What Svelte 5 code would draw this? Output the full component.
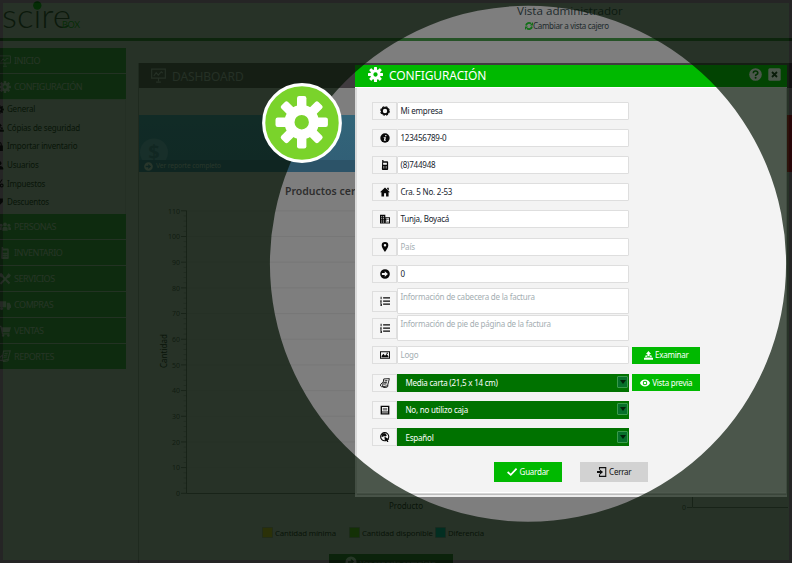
<script>
  const fields = [
    { icon: 'ring', text: 'Mi empresa' },
    { icon: 'info', text: '123456789-0' },
    { icon: 'phone', text: '(8)744948' },
    { icon: 'home', text: 'Cra. 5 No. 2-53' },
    { icon: 'building', text: 'Tunja, Boyacá' },
    { icon: 'pin', text: 'País', hint: true },
    { icon: 'arrow', text: '0' },
    { icon: 'list', text: 'Información de cabecera de la factura', hint: true, area: true },
    { icon: 'list', text: 'Información de pie de página de la factura', hint: true, area: true },
    { icon: 'image', text: 'Logo', hint: true, button: 'Examinar', buttonIcon: 'upload' },
    { icon: 'report', text: 'Media carta (21,5 x 14 cm)', select: true, button: 'Vista previa', buttonIcon: 'eye' },
    { icon: 'box', text: 'No, no utilizo caja', select: true },
    { icon: 'globe', text: 'Español', select: true }
  ];
  const topItems = [['board', 'INICIO'], ['gear', 'CONFIGURACIÓN']];
  const subItems = [
    ['gear', 'General'],
    ['upload', 'Cópias de seguridad'],
    ['lock', 'Importar inventario'],
    ['user', 'Usuarios'],
    ['percent', 'Impuestos'],
    ['tag', 'Descuentos']
  ];
  const lowItems = [
    ['people', 'PERSONAS'],
    ['phone', 'INVENTARIO'],
    ['tools', 'SERVICIOS'],
    ['truck', 'COMPRAS'],
    ['cart', 'VENTAS'],
    ['report', 'REPORTES']
  ];
  const legend = [
    ['#8a7a14', 'Cantidad mínima', 263, 61],
    ['#3c7a10', 'Cantidad disponible', 350, 71],
    ['#007068', 'Diferencia', 436, 36]
  ];
  const teeth = [0, 45, 90, 135, 180, 225, 270, 315];
  const majors = Array.from({ length: 12 }, (_, i) => i);
  const minors = Array.from({ length: 55 }, (_, i) => i).filter((i) => i % 5);
</script>

{#snippet icon(name, size)}
  <svg class="icon" width={size} height={size} viewBox="0 0 16 16" fill="currentColor" stroke="none">
    {#if name === 'gear'}
      {#each teeth as a}
        <rect x="6.4" y="0" width="3.2" height="5" rx=".6" transform="rotate({a} 8 8)" />
      {/each}
      <circle cx="8" cy="8" r="3.9" fill="none" stroke="currentColor" stroke-width="3.2" />
    {:else if name === 'ring'}
      <circle cx="8" cy="8" r="5" fill="none" stroke="currentColor" stroke-width="3" />
      <circle cx="8" cy="8" r="6.8" fill="none" stroke="currentColor" stroke-width="1.8" stroke-dasharray="3.4 1.94" />
    {:else if name === 'info'}
      <circle cx="8" cy="8" r="7.5" />
      <path d="M8.5 3.2h2l-.5 2H8zM6 6.7h3.6L8.5 11h1l-.3 1.4H6L7 8.1H5.7z" fill="#f5f5f5" />
    {:else if name === 'phone'}
      <path fill-rule="evenodd" d="M3.5 2.5V0h2v2h6q1.5 0 1.5 1.5v11q0 1.5-1.5 1.5h-7Q3 16 3 14.5zM5 4.5v3h6v-3zM5 9.5v1h1.4v-1zm2.3 0v1h1.4v-1zm2.3 0v1H11v-1zM5 12v1h1.4v-1zm2.3 0v1h1.4v-1zm2.3 0v1H11v-1z" />
    {:else if name === 'home'}
      <path fill-rule="evenodd" d="M8 .8 16 8.5h-2.3V15H9.7v-5H6.5v5H2.3V8.5H0zM11.5 1H14v4l-2.5-2z" />
    {:else if name === 'building'}
      <path fill-rule="evenodd" d="M0 1h8.5v4H16v10H0zM2 3v1.5h1.5V3zm3 0v1.5h1.5V3zM2 6v1.5h1.5V6zm3 0v1.5h1.5V6zM2 9v1.5h1.5V9zm3 0v1.5h1.5V9zM2 12v1.5h1.5V12zm3 0v1.5h1.5V12zm4-5.4v1h1.5v1.8H9v1h1.5v1.7H9v1.3h5.5V6.600zm3 1.400h1.400v1.400H12zm0 3h1.400v1.400H12z" />
    {:else if name === 'pin'}
      <path fill-rule="evenodd" d="M8 0a5.300 5.300 0 0 0-5.300 5.300C2.700 9.500 8 16 8 16s5.300-6.500 5.300-10.700A5.300 5.300 0 0 0 8 0zm0 3.300a2 2 0 1 1 0 4 2 2 0 0 1 0-4z" />
    {:else if name === 'arrow'}
      <path fill-rule="evenodd" d="M8 .3a7.700 7.700 0 1 1 0 15.400A7.700 7.700 0 0 1 8 .3zM7.600 3.500v3H3v3h4.600v3L12.700 8z" />
    {:else if name === 'list'}
      <path d="M5 2h11v2H5zm0 5h11v2H5zm0 5h11v2H5zM1 1h1.500v4H1zM0 7h3v1L1.700 9.200H3v1H0V9l1.500-1.200H0zm0 5h3v4H0v-1h1.800v-.5H1v-1h.8V13H0z" />
    {:else if name === 'image'}
      <path fill-rule="evenodd" d="M0 2h16v12H0zm1.500 1.500v9h13v-9z" />
      <path d="M2.500 11.500v-2L5.500 6 8 9l2.500-2.500 3 3.500v1.500z" /><circle cx="11.500" cy="5.300" r="1.200" />
    {:else if name === 'report'}
      <g fill="none" stroke="currentColor" stroke-width="1.400">
        <path d="M6 1.500 15 1 12 12.500 4 14zM4 14C1 14.500 0 12 1.500 9.500L4.500 7M5 15.500l6-.8q1.500-.5 2-2.500" />
        <path d="M7.300 4.600l4.500-.4M6.600 7.200l4.500-.4M5.900 9.800l4.500-.5" />
      </g>
    {:else if name === 'box'}
      <path fill-rule="evenodd" d="M1 1h14v14H1zm2.200 2v7.500h9.600V3zm0 9v1.200h9.600V12z" /><path d="M4.500 5h7v1h-7zm0 2.200h7v1h-7z" />
    {:else if name === 'globe'}
      <circle cx="7.500" cy="7.500" r="6.500" fill="none" stroke="currentColor" stroke-width="1.800" />
      <path d="M4 2.500 8 2l3 3-2 2-3-1-1 2-3-1zM7 7l8 5-3 .5 1.500 3-2 .8-1.500-3L8 15z" />
    {:else if name === 'upload'}
      <path d="M8 0l4.500 5.300H10V9H6V5.300H3.500zM3 7.500h2v2.700h6V7.500h2l1 3.500H2zM0 12h16v3.500H0z" />
    {:else if name === 'eye'}
      <path fill-rule="evenodd" d="M8 2.500c3.600 0 6.700 2.200 8 5.500-1.300 3.300-4.400 5.500-8 5.500S1.300 11.300 0 8c1.300-3.300 4.400-5.500 8-5.500zm0 1.900a3.600 3.600 0 1 0 0 7.200 3.600 3.600 0 0 0 0-7.200zm0 1.500a2.100 2.100 0 1 1 0 4.200 2.100 2.100 0 0 1 0-4.200z" />
    {:else if name === 'check'}
      <path d="M1 8 6 12.500 15.300 2.500" fill="none" stroke="currentColor" stroke-width="2.800" />
    {:else if name === 'exit'}
      <path d="M4 4.500V1h10v14H4v-3.500" fill="none" stroke="currentColor" stroke-width="1.700" />
      <path d="M0 6.500h4.500V3.800L9.700 8l-5.200 4.200V9.500H0z" />
    {:else if name === 'board'}
      <path d="M.7 1.200h14.600v9.600H.7zM8 11v3M5.500 15h5M3 8.500l2.500-3.500 2.300 2.700L11 4l1.500 1.500" fill="none" stroke="currentColor" stroke-width="1.200" />
    {:else if name === 'lock'}
      <path fill-rule="evenodd" d="M4 6V4a4 4 0 0 1 8 0v2h2v10H2V6zm2 0h4V4a2 2 0 0 0-4 0z" />
    {:else if name === 'user'}
      <circle cx="8" cy="4" r="3.500" /><path d="M1 15q0-6 7-6t7 6z" />
    {:else if name === 'percent'}
      <circle cx="4" cy="4.500" r="2.500" fill="none" stroke="currentColor" stroke-width="2" /><circle cx="12" cy="11.500" r="2.500" fill="none" stroke="currentColor" stroke-width="2" /><path d="M11.500 1h2l-9 14h-2z" />
    {:else if name === 'tag'}
      <path d="M7 1h7v6l-8 8-6-6z" />
    {:else if name === 'people'}
      <circle cx="8" cy="4.500" r="2.500" /><circle cx="2.800" cy="5.500" r="2" /><circle cx="13.200" cy="5.500" r="2" />
      <path d="M4.500 13V9.500q0-2 3.500-2t3.500 2V13zM0 12V9.500Q0 8 3.500 8v4zM16 12V9.500Q16 8 12.500 8v4z" />
    {:else if name === 'tools'}
      <path d="M2 1.500 14 14M14 2 2 14.500" stroke="currentColor" stroke-width="2.500" /><path d="M10 4l3-4 1 2 2 .5L14 6l-3 1zM0 1l3-1 3 3-3 3-3-3z" />
    {:else if name === 'truck'}
      <path d="M0 3h9.500v8H0zM10.500 5H14l2 3.500V12h-5.500z" /><circle cx="3.500" cy="12.500" r="2" /><circle cx="12.500" cy="12.500" r="2" />
    {:else if name === 'cart'}
      <path d="M0 1h3l.6 2H16l-2 6.500H5l.3 1.500H14v1.500H4L2 2.500H0z" /><circle cx="5.500" cy="14" r="1.600" /><circle cx="12.500" cy="14" r="1.600" />
    {/if}
  </svg>
{/snippet}

<div class="screen">
  <div class="page">
    <header class="top">
      <svg class="logo" width="86" height="38" viewBox="0 0 86 38">
        <text x="2" y="27.800" textLength="69" lengthAdjust="spacingAndGlyphs" class="brand">scire</text>
        <circle cx="37.300" cy="5.500" r="4.200" fill="#076c0c" />
        <text x="62" y="28" textLength="18" class="brand-box">BOX</text>
      </svg>
      <div class="role">
        <div class="role-name">Vista administrador</div>
        <div class="role-switch">
          <svg width="8" height="8" viewBox="0 0 16 16"><path d="M2 7a6 6 0 0 1 10-3.500M14 9a6 6 0 0 1-10 3.500" fill="none" stroke="#137018" stroke-width="3.500" /><path d="M10 7h6V0zM6 9H0v7z" fill="#137018" /></svg><span>Cambiar a vista cajero</span>
        </div>
      </div>
    </header>
    <div class="columns">
      <nav class="sidebar">
        {#each topItems as [ic, label]}
          <div class="nav-item">{@render icon(ic, 12)}<span>{label}</span></div>
        {/each}
        <div class="submenu">
          {#each subItems as [ic, label]}
            <div class="sub-item">{@render icon(ic, 9)}<span>{label}</span></div>
          {/each}
        </div>
        {#each lowItems as [ic, label]}
          <div class="nav-item">{@render icon(ic, 12)}<span>{label}</span></div>
        {/each}
      </nav>
      <main class="panel">
        <div class="panel-head">{@render icon('board', 15)}<span>DASHBOARD</span></div>
        <div class="cards">
          <div class="card blue">
            <svg class="coin" width="30" height="22" viewBox="0 0 30 22"><circle cx="15" cy="14.500" r="14" fill="#4b7286" /><text x="15" y="20.500" text-anchor="middle">$</text></svg>
            <div class="card-foot">{@render icon('arrow', 9)}<span>Ver reporte completo</span></div>
          </div>
          <div class="card red"></div>
        </div>
        <svg class="chart" width="653" height="391" viewBox="139 172 653 391">
          <text x="286" y="195" class="chart-title">Productos cercanos</text>
          <g stroke="#4a4a4a" stroke-width="1">
            <path d="M187.500 210.500V493.500H640M693.500 470V507.500H789M688 507.500h5" fill="none" />
            {#each majors as i}
              <path d="M182 {493.300 - i * 25.680}h5.500" />
              <path d="M188 {493.300 - i * 25.680}h170" opacity=".12" />
            {/each}
            {#each minors as i}
              <path d="M184.500 {493.300 - i * 5.136}h3" opacity=".45" />
            {/each}
          </g>
          {#each majors as i}
            <text x="181" y={496 - i * 25.680} text-anchor="end" class="tick">{i * 10}</text>
          {/each}
          <text x="687" y="510" text-anchor="end" class="tick">0</text>
          <text transform="translate(168 368) rotate(-90)" textLength="34" class="axis">Cantidad</text>
          <text x="390" y="509" textLength="34" class="axis">Producto</text>
          {#each legend as [color, label, x, w]}
            <rect x={x + 0.500} y="527.500" width="10" height="10" fill={color} stroke="#555" stroke-opacity=".5" />
            <text x={x + 13} y="536" textLength={w} class="legend">{label}</text>
          {/each}
          <rect x="330" y="554" width="124" height="9" fill="#1f4a20" />
          <circle cx="352" cy="562" r="5.500" fill="#7e8e7e" />
          <path d="M349 562h5m-2-2.500 2.500 2.500" stroke="#1f4a20" fill="none" stroke-width="1.500" />
          <text x="361" y="566" textLength="76" class="legend more">Ver reporte completo</text>
        </svg>
      </main>
    </div>
  </div>

  <section class="modal">
    <header class="modal-head">
      {@render icon('gear', 15)}
      <h1>CONFIGURACIÓN</h1>
      <div class="actions">
        <svg width="13" height="13" viewBox="0 0 13 13"><circle cx="6.500" cy="6.500" r="6.300" fill="#f8f8f8" /><path d="M4.300 5.200Q4.300 3 6.500 3t2.300 1.900Q8.800 6 7.500 6.600 6.600 7 6.600 8" fill="none" stroke="#007a00" stroke-width="1.600" /><circle cx="6.600" cy="9.800" r="1" fill="#007a00" /></svg>
        <svg width="13" height="13" viewBox="0 0 13 13"><rect x=".3" y=".3" width="12.400" height="12.400" rx="1.500" fill="#f8f8f8" /><path d="M4 4l5 5M9 4l-5 5" stroke="#183018" stroke-width="1.800" /></svg>
      </div>
    </header>
    <div class="form">
      {#each fields as f}
        <div class="row">
          <div class="addon" class:tall={f.area}>{@render icon(f.icon, 10)}</div>
          <div class="control" class:area={f.area} class:select={f.select} class:hint={f.hint}>
            <span>{f.text}</span>
            {#if f.select}
              <i class="drop"><svg width="6" height="4" viewBox="0 0 6 4"><path d="M0 0h6L3 4z" fill="#02220a" /></svg></i>
            {/if}
          </div>
          {#if f.button}
            <div class="btn small">{@render icon(f.buttonIcon, f.buttonIcon === 'eye' ? 10 : 9)}<span>{f.button}</span></div>
          {/if}
        </div>
      {/each}
    </div>
    <footer class="modal-foot">
      <div class="btn">{@render icon('check', 10)}<span>Guardar</span></div>
      <div class="btn plain">{@render icon('exit', 10)}<span>Cerrar</span></div>
    </footer>
  </section>

  <svg class="shade" width="792" height="563" viewBox="0 0 792 563">
    <path fill-rule="evenodd" fill="#031203" fill-opacity=".7" d="M3 3H789V560H3zM528 5.800a258 258 0 1 0 0 516 258 258 0 1 0 0-516z" />
    <path fill-rule="evenodd" fill="#000" fill-opacity=".7" d="M0 0H792V563H0zM3 3V560H789V3z" />
  </svg>
  <svg class="badge" width="80" height="80" viewBox="0 0 80 80">
    <circle cx="40" cy="40" r="38.300" fill="#7ad32b" stroke="#fff" stroke-width="3.200" />
    <g fill="#fff" transform="translate(39.700 39.200)">
      {#each teeth as a}
        <rect x="-4.700" y="-26.200" width="9.400" height="14" rx="2.200" transform="rotate({a})" />
      {/each}
      <circle r="12.200" fill="none" stroke="#fff" stroke-width="10" />
    </g>
  </svg>
</div>

<style>
  :global(body) { background: #7e7e7e; }
  .screen {
    position: relative;
    width: 792px;
    height: 563px;
    overflow: hidden;
    background: #7e7e7e;
    font-family: 'Noto Sans', 'Open Sans', sans-serif;
    line-height: 1;
    white-space: nowrap;
  }
  .icon { flex: none; display: block; }
  .top {
    display: flex;
    justify-content: space-between;
    box-sizing: border-box;
    height: 41px;
    border-bottom: 3px solid #255226;
  }
  .brand { font-family: Lato, sans-serif; font-weight: 300; font-size: 33px; fill: #222a22; }
  .brand-box { font-family: Lato, sans-serif; font-size: 9px; fill: #106814; }
  .role { width: 106px; margin-right: 169px; padding-top: 4px; color: #202a2c; }
  .role-name { font-family: 'Open Sans', sans-serif; font-size: 11.600px; line-height: 14px; }
  .role-switch { display: flex; align-items: center; margin: 2.500px 0 0 8px; font-size: 8px; line-height: 10px; letter-spacing: -.32px; }
  .columns { display: flex; height: 522px; }
  .sidebar { width: 125.500px; padding-top: 7px; flex: none; }
  .nav-item {
    display: flex;
    align-items: center;
    gap: 3px;
    box-sizing: border-box;
    height: 26px;
    border-bottom: 1px solid #707e70;
    background: #2a672c;
    color: #7a867a;
    font-size: 9px;
    letter-spacing: -.45px;
  }
  .nav-item:last-child { border-bottom-color: #2a672c; height: 25px; }
  .nav-item .icon { margin-left: -1px; }
  .submenu { display: flex; flex-direction: column; height: 114px; box-sizing: border-box; border-right: 1px solid #747474; }
  .sub-item { display: flex; flex: none; align-items: center; gap: 3px; height: 18.600px; margin-left: -5px; color: #151a15; font-size: 8px; letter-spacing: -.2px; line-height: 10px; }
  .panel { flex: 1; margin: 22px 0 0 12.500px; border-left: 1px solid #626262; min-width: 0; }
  .panel-head {
    display: flex;
    align-items: center;
    gap: 6px;
    height: 25px;
    padding-left: 12px;
    background: #403b3f;
    color: #767676;
    font-size: 12px;
    letter-spacing: -.1px;
  }
  .panel-head span { margin-top: 2px; }
  .cards { display: flex; justify-content: space-between; padding-top: 27px; height: 57px; }
  .card.blue { width: 240px; display: flex; flex-direction: column; justify-content: flex-end; background: linear-gradient(#326579, #315e76); }
  .coin { display: block; }
  .coin text { font-size: 20px; font-weight: 700; fill: #34596c; }
  .card-foot { display: flex; align-items: center; gap: 3px; height: 12px; padding-left: 5px; background: #2c5368; color: #838b8b; font-size: 6.700px; letter-spacing: -.1px; }
  .card.red { width: 8px; background: #8c1a1e; }
  .chart { display: block; margin-left: -1px; }
  .chart-title { font-size: 10.500px; font-weight: 600; fill: #2e2e2e; }
  .tick { font-size: 7px; fill: #343434; }
  .axis { font-size: 8px; fill: #151515; }
  .legend { font-size: 7.800px; fill: #151515; }
  .more { fill: #6c7c6c; }

  .modal {
    position: absolute;
    left: 355px;
    top: 65px;
    width: 431.500px;
    height: 432px;
    box-sizing: border-box;
    background: #f3f3f3;
    border-bottom: 2px solid #ececec;
    display: flex;
    flex-direction: column;
    box-shadow: inset 2px 0 #dadada, inset -1px 0 #ccc, inset 0 -1px #bdbdbd, inset 0 -2px #d6d6d6, inset 0 -3px #fff;
  }
  .modal-head {
    display: flex;
    align-items: center;
    height: 22px;
    border-bottom: 1px solid #fff;
    padding: 0 6px 0 12.500px;
    background: #00b900;
    color: #fff;
  }
  .modal-head .icon { margin-top: -3px; }
  h1 { margin: 0 0 0 6.500px; font-size: 12px; font-weight: 400; letter-spacing: -.1px; }
  .actions { margin-left: auto; display: flex; gap: 6px; margin-top: -3px; }
  .form { padding: 8.900px 0 0 17px; }
  .row { display: flex; align-items: center; height: 27.230px; }
  .addon {
    display: grid;
    place-items: center;
    box-sizing: border-box;
    width: 25px;
    height: 18px;
    border: 1px solid #dedede;
    background: #f5f5f5;
    color: #080808;
  }
  .addon.tall { height: 21px; }
  .control {
    display: flex;
    align-items: center;
    box-sizing: border-box;
    width: 232px;
    height: 18px;
    border: 1px solid #dedede;
    border-radius: 1px;
    background: #fff;
    padding-left: 2.500px;
    color: #16242e;
    font-size: 8px;
    letter-spacing: -.22px;
  }
  .control.area { height: 26px; align-items: flex-start; padding-top: 3.500px; }
  .control.hint { color: #a4aeb2; }
  .control.select { background: #007200; border: 0; border-radius: 0; color: #fff; padding: 1px 1px 0 8.500px; justify-content: space-between; }
  .drop { display: grid; place-items: center; box-sizing: border-box; width: 11px; height: 12px; border: 1px solid #3a9a4c; border-radius: 1px; background: #06702a; margin-top: -2px; }
  .btn {
    display: flex;
    align-items: center;
    justify-content: center;
    gap: 2.500px;
    width: 68px;
    height: 19.500px;
    background: #00b900;
    color: #fff;
    font-size: 8px;
    letter-spacing: -.25px;
  }
  .btn.small { height: 17.500px; margin-left: 3px; }
  .btn.plain { background: #d2d2d2; color: #101010; }
  .modal-foot { display: flex; gap: 18px; padding: 11.500px 0 0 139px; }
  .shade { position: absolute; left: 0; top: 0; }
  .badge { position: absolute; left: 262px; top: 83px; }
</style>
